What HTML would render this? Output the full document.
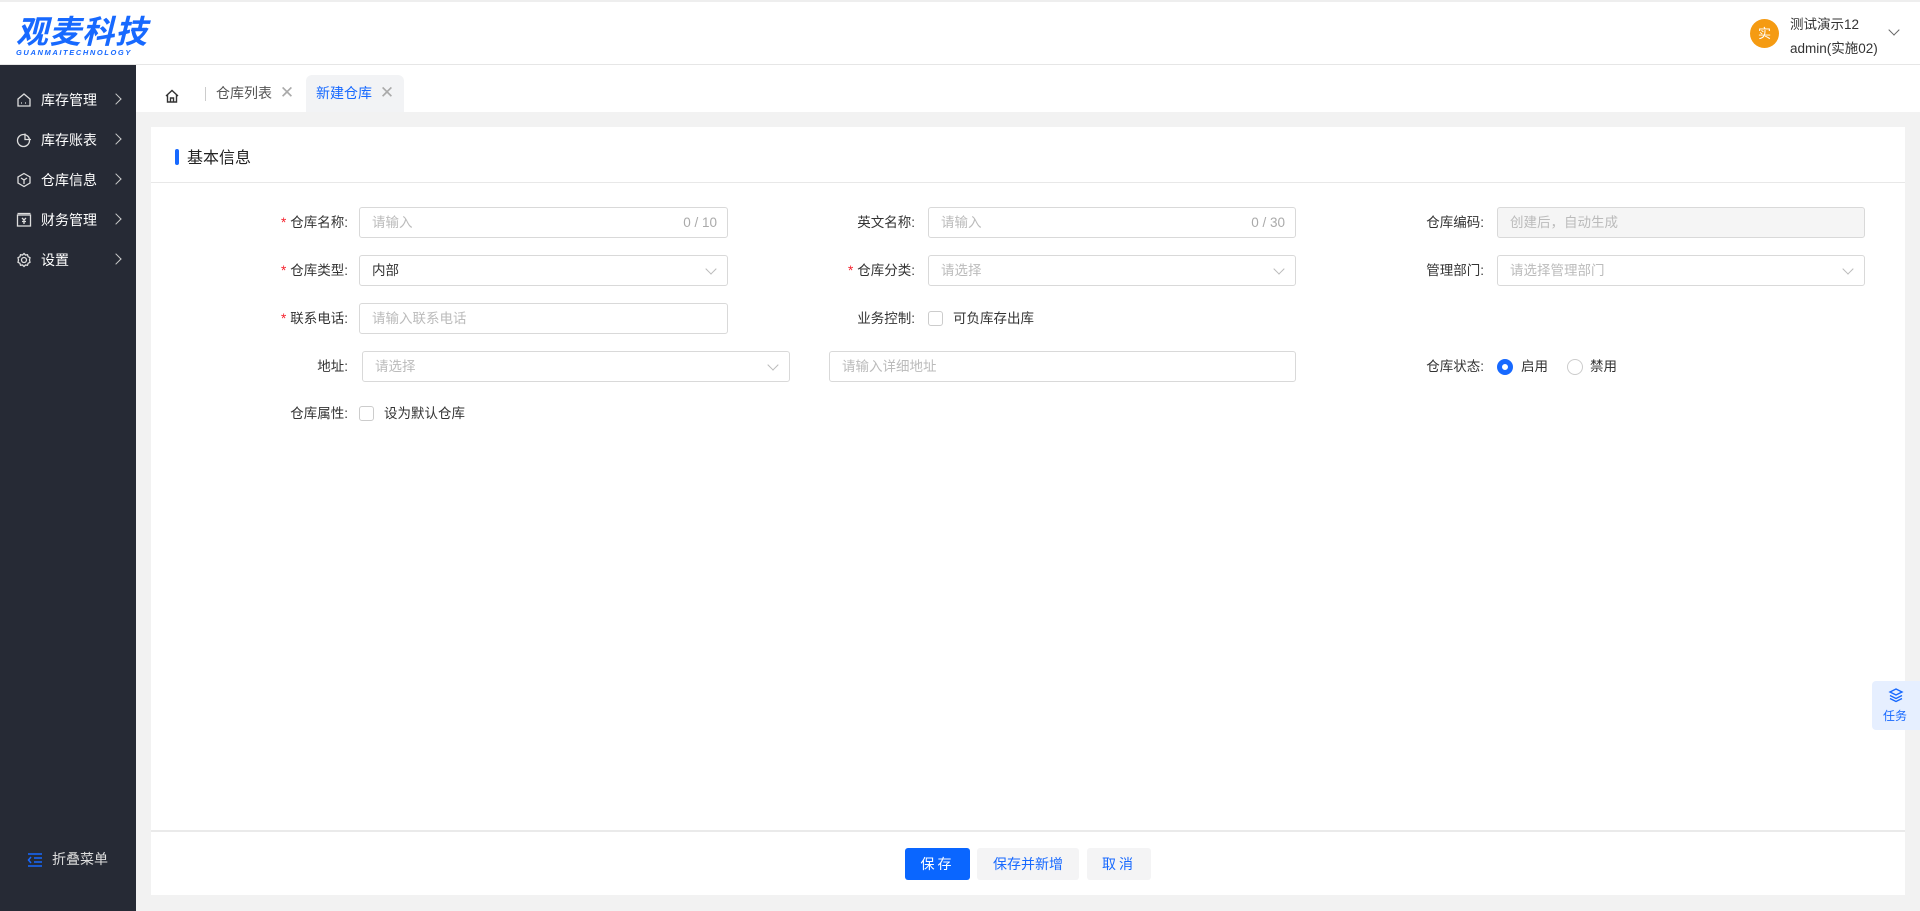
<!DOCTYPE html>
<html><head><meta charset="utf-8"><style>
*{margin:0;padding:0;box-sizing:border-box}
body{width:1920px;height:911px;overflow:hidden;background:#f2f2f2;font-family:"Liberation Sans","Noto Sans CJK SC",sans-serif;font-size:14px;color:#333;position:relative}
.abs{position:absolute}
.hdr{left:0;top:0;width:1920px;height:65px;background:#fff;border-bottom:1px solid #e6e6e6;border-top:2px solid #eee}
.side{left:0;top:65px;width:136px;height:846px;background:#262a35}
.mi{position:absolute;left:0;width:136px;height:30px;color:#fff;font-size:14px;line-height:30px}
.mi svg{position:absolute;left:16px;top:7px}
.mi span{position:absolute;left:41px}
.mi i{position:absolute;left:112px;top:10px;width:8px;height:8px;border-right:1.3px solid #ccc;border-top:1.3px solid #ccc;transform:rotate(45deg)}
.tabs{left:136px;top:65px;width:1784px;height:47px;background:#fff}
.card{left:151px;top:127px;width:1754px;height:768px;background:#fff}
.lbl{position:absolute;text-align:right;font-size:13.5px;line-height:32px;color:#333}
.lbl b{color:#f5222d;font-weight:normal;margin-right:4px}
.inp{position:absolute;height:31px;border:1px solid #d9d9d9;border-radius:3px;background:#fff;font-size:13.5px;line-height:29px;padding-left:12px;color:#bbb}
.inp .r{position:absolute;right:10px;top:0;color:#aaa}
.inp .ar{position:absolute;right:12px;top:9px;width:8px;height:8px;border-right:1px solid #bbb;border-bottom:1px solid #bbb;transform:rotate(45deg)}
.cb{position:absolute;width:15px;height:15px;border:1px solid #ccc;border-radius:3px}
.txt{position:absolute;font-size:13.5px;line-height:32px;color:#333}
.btn{position:absolute;top:848px;height:32px;border-radius:3px;font-size:14px;line-height:32px;text-align:center}
</style></head><body>
<div class="abs hdr">
 <div class="abs" style="left:16px;top:13px;font-size:32px;font-style:italic;font-weight:bold;color:#1769ff;letter-spacing:1px;line-height:34px">观麦科技</div>
 <div class="abs" style="left:16px;top:46px;font-size:7.5px;font-style:italic;font-weight:bold;color:#1769ff;letter-spacing:1.6px">GUANMAITECHNOLOGY</div>
 <div class="abs" style="left:1750px;top:17px;width:29px;height:29px;border-radius:50%;background:#f59b12;color:#fff;text-align:center;line-height:29px;font-size:13px">实</div>
 <div class="abs" style="left:1790px;top:11px;font-size:13.5px;color:#333">测试演示12</div>
 <div class="abs" style="left:1790px;top:35px;font-size:13.5px;color:#333">admin(实施02)</div>
 <div class="abs" style="left:1890px;top:24px;width:8px;height:8px;border-right:1.3px solid #666;border-bottom:1.3px solid #666;transform:rotate(45deg)"></div>
</div>
<div class="abs side">
 <div class="mi" style="top:20px"><svg width="16" height="16" viewBox="0 0 16 16" fill="none" stroke="#ddd" stroke-width="1.3"><path d="M2 7L8 2l6 5v7H2z"/><path d="M5 11h1M9 11h1"/></svg><span>库存管理</span><i></i></div>
 <div class="mi" style="top:60px"><svg width="16" height="16" viewBox="0 0 16 16" fill="none" stroke="#ddd" stroke-width="1.3"><circle cx="7.5" cy="8.5" r="6"/><path d="M9 1.5v6h6"/></svg><span>库存账表</span><i></i></div>
 <div class="mi" style="top:100px"><svg width="16" height="16" viewBox="0 0 16 16" fill="none" stroke="#ddd" stroke-width="1.3"><path d="M8 1.5l6 3.5v6l-6 3.5-6-3.5V5z"/><path d="M5 6l3 2 3-2M8 8v4"/></svg><span>仓库信息</span><i></i></div>
 <div class="mi" style="top:140px"><svg width="16" height="16" viewBox="0 0 16 16" fill="none" stroke="#ddd" stroke-width="1.3"><rect x="1.5" y="3" width="13" height="11"/><path d="M1.5 1.5h13M6 6l2 2 2-2M8 8v4M6 9.5h4"/></svg><span>财务管理</span><i></i></div>
 <div class="mi" style="top:180px"><svg width="16" height="16" viewBox="0 0 16 16" fill="none" stroke="#ddd" stroke-width="1.3"><circle cx="8" cy="8" r="2.5"/><path d="M8 1.5l1.5 1.5 2-.3.6 2 1.9 1L13.5 8l.5 2.3-1.9 1-.6 2-2-.3L8 14.5 6.5 13l-2 .3-.6-2-1.9-1L2.5 8 2 5.7l1.9-1 .6-2 2 .3z"/></svg><span>设置</span><i></i></div>
 <div class="abs" style="left:27px;top:787px;width:16px;height:16px">
  <svg width="16" height="16" viewBox="0 0 16 16" fill="none" stroke="#1769ff" stroke-width="1.5"><path d="M1 2h14M1 14h14M7 6h8M7 10h8M4 5L1.5 8 4 11"/></svg></div>
 <div class="abs" style="left:52px;top:784px;color:#ddd;font-size:14px">折叠菜单</div>
</div>
<div class="abs tabs">
 <svg class="abs" style="left:28px;top:23px" width="16" height="16" viewBox="0 0 16 16" fill="none" stroke="#333" stroke-width="1.4"><path d="M2 8L8 2.5 14 8M3.5 7v7h9V7M6.5 14v-4h3v4"/></svg>
 <div class="abs" style="left:69px;top:22px;width:1px;height:14px;background:#ccc"></div>
 <div class="abs" style="left:80px;top:18px;font-size:14px;color:#555">仓库列表 <span style="color:#aaa;font-size:17px;margin-left:4px">✕</span></div>
 <div class="abs" style="left:170px;top:10px;width:98px;height:37px;background:#f2f3f5;border-radius:6px 6px 0 0"></div>
 <div class="abs" style="left:180px;top:18px;font-size:14px;color:#1769ff">新建仓库 <span style="color:#aaa;font-size:17px;margin-left:4px">✕</span></div>
</div>
<div class="abs card">
 <div class="abs" style="left:24px;top:22px;width:4px;height:16px;background:#1769ff;border-radius:2px"></div>
 <div class="abs" style="left:36px;top:17px;font-size:16px;color:#222">基本信息</div>
 <div class="abs" style="left:0;top:55px;width:1754px;height:1px;background:#e8e8e8"></div>
 <div class="abs" style="left:0;top:703px;width:1754px;height:2px;background:#eaeaea"></div>
</div>
<div class="lbl" style="left:200px;top:207px;width:148px"><b>*</b>仓库名称:</div>
<div class="inp" style="left:359px;top:207px;width:369px">请输入<span class="r">0 / 10</span></div>
<div class="lbl" style="left:770px;top:207px;width:145px">英文名称:</div>
<div class="inp" style="left:928px;top:207px;width:368px">请输入<span class="r">0 / 30</span></div>
<div class="lbl" style="left:1330px;top:207px;width:154px">仓库编码:</div>
<div class="inp" style="left:1497px;top:207px;width:368px;background:#f5f5f5">创建后，自动生成</div>
<div class="lbl" style="left:200px;top:255px;width:148px"><b>*</b>仓库类型:</div>
<div class="inp" style="left:359px;top:255px;width:369px;color:#333">内部<span class="ar"></span></div>
<div class="lbl" style="left:770px;top:255px;width:145px"><b>*</b>仓库分类:</div>
<div class="inp" style="left:928px;top:255px;width:368px">请选择<span class="ar"></span></div>
<div class="lbl" style="left:1330px;top:255px;width:154px">管理部门:</div>
<div class="inp" style="left:1497px;top:255px;width:368px">请选择管理部门<span class="ar"></span></div>
<div class="lbl" style="left:200px;top:303px;width:148px"><b>*</b>联系电话:</div>
<div class="inp" style="left:359px;top:303px;width:369px">请输入联系电话</div>
<div class="lbl" style="left:770px;top:303px;width:145px">业务控制:</div>
<div class="cb" style="left:928px;top:311px"></div>
<div class="txt" style="left:953px;top:303px">可负库存出库</div>
<div class="lbl" style="left:200px;top:351px;width:148px">地址:</div>
<div class="inp" style="left:362px;top:351px;width:428px">请选择<span class="ar"></span></div>
<div class="inp" style="left:829px;top:351px;width:467px">请输入详细地址</div>
<div class="lbl" style="left:1330px;top:351px;width:154px">仓库状态:</div>
<div class="abs" style="left:1497px;top:359px;width:16px;height:16px;border-radius:50%;border:5px solid #1769ff"></div>
<div class="txt" style="left:1521px;top:351px">启用</div>
<div class="abs" style="left:1567px;top:359px;width:16px;height:16px;border-radius:50%;border:1px solid #ccc"></div>
<div class="txt" style="left:1590px;top:351px">禁用</div>
<div class="lbl" style="left:200px;top:398px;width:148px">仓库属性:</div>
<div class="cb" style="left:359px;top:406px"></div>
<div class="txt" style="left:384px;top:398px">设为默认仓库</div>
<div class="btn" style="left:905px;width:65px;background:#0a66ff;color:#fff;letter-spacing:3px">保存</div>
<div class="btn" style="left:977px;width:102px;background:#f4f4f5;color:#1769ff">保存并新增</div>
<div class="btn" style="left:1087px;width:64px;background:#f4f4f5;color:#1769ff;letter-spacing:3px">取消</div>
<div class="abs" style="left:1872px;top:681px;width:48px;height:49px;background:#e6efff;border-radius:4px 0 0 4px">
 <svg class="abs" style="left:16px;top:6px" width="16" height="16" viewBox="0 0 16 16" fill="none" stroke="#1769ff" stroke-width="1.4"><path d="M8 2l6 3-6 3-6-3z"/><path d="M2 8.5l6 3 6-3M2 11.5l6 3 6-3"/></svg>
 <div class="abs" style="left:11px;top:26px;font-size:12px;color:#1769ff">任务</div>
</div>
</body></html>
